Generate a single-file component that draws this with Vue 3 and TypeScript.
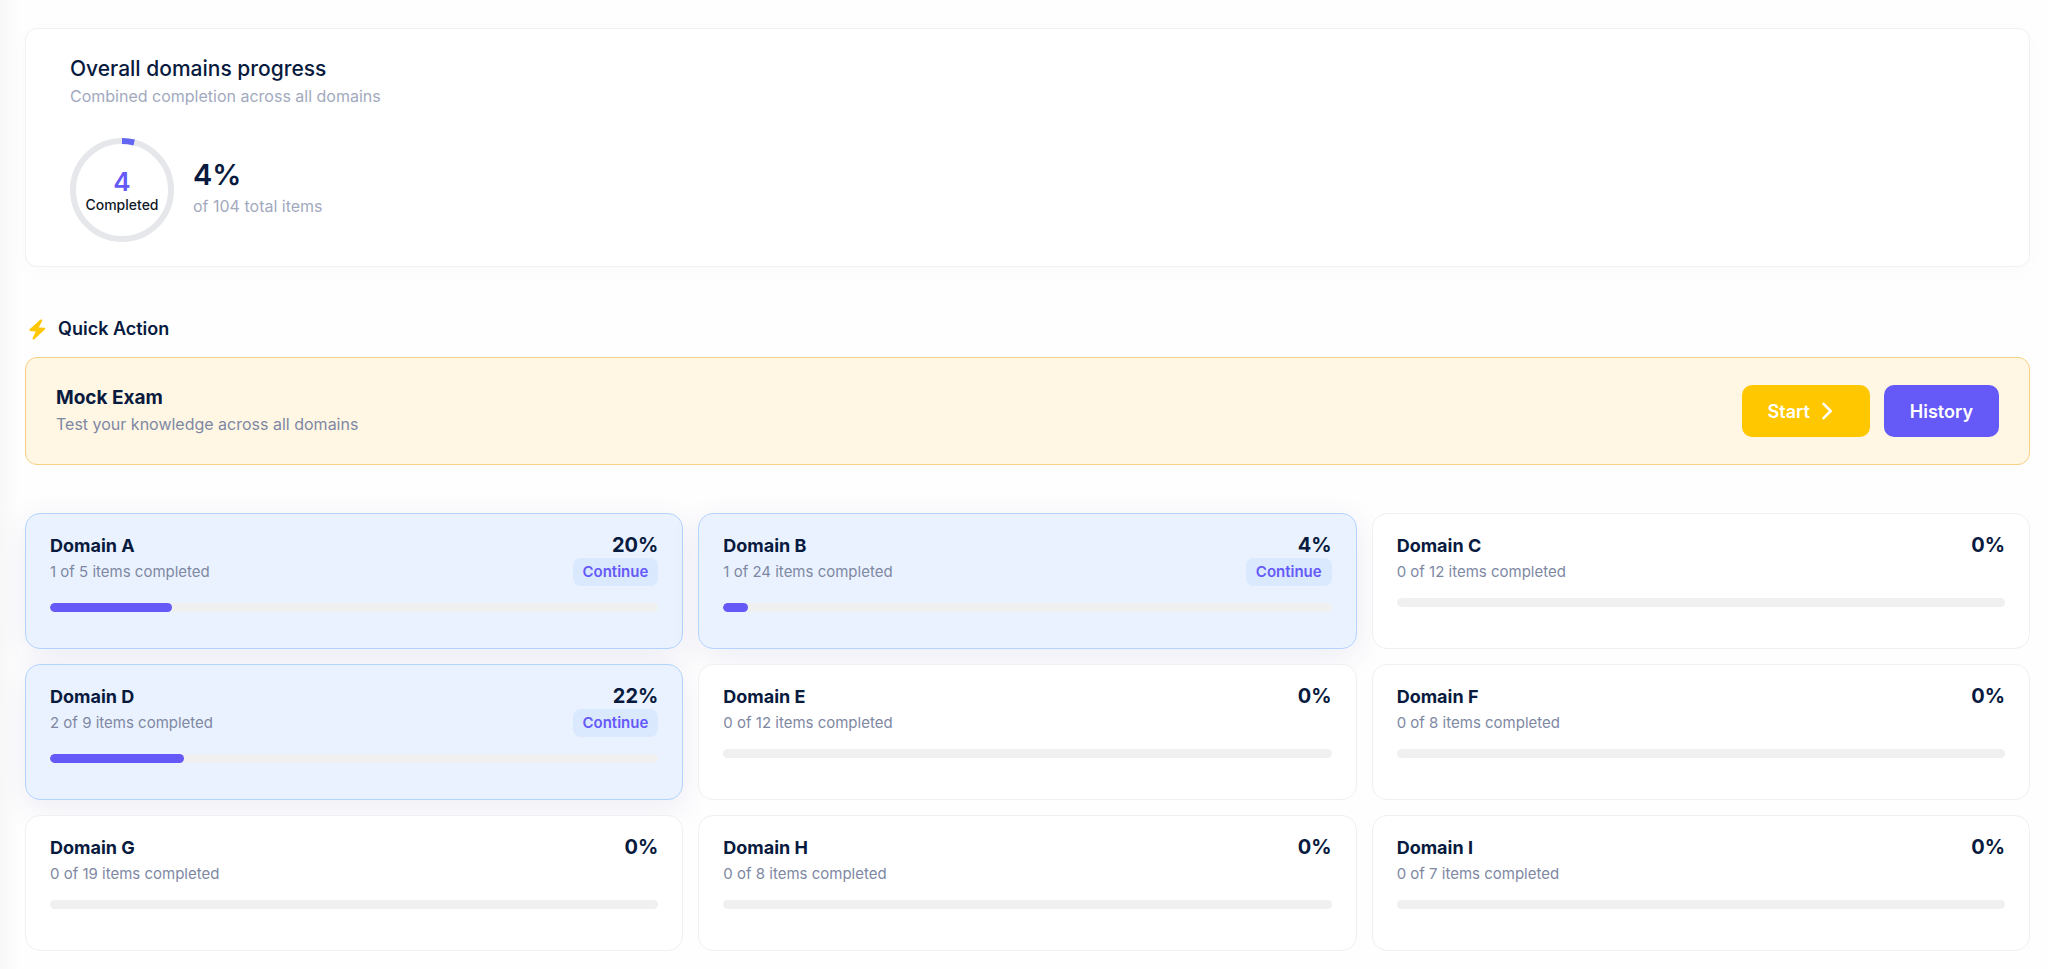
<script setup lang="ts">
import { computed } from 'vue'

interface Domain {
  name: string
  done: number
  total: number
}

const domains: Domain[] = [
  { name: 'Domain A', done: 1, total: 5 },
  { name: 'Domain B', done: 1, total: 24 },
  { name: 'Domain C', done: 0, total: 12 },
  { name: 'Domain D', done: 2, total: 9 },
  { name: 'Domain E', done: 0, total: 12 },
  { name: 'Domain F', done: 0, total: 8 },
  { name: 'Domain G', done: 0, total: 19 },
  { name: 'Domain H', done: 0, total: 8 },
  { name: 'Domain I', done: 0, total: 7 },
]

const percent = (done: number, total: number): number => Math.round((done / total) * 100)

const completed = computed(() => domains.reduce((sum, d) => sum + d.done, 0))
const total = computed(() => domains.reduce((sum, d) => sum + d.total, 0))
const overall = computed(() => percent(completed.value, total.value))
</script>

<template>
  <main class="page">
    <section class="overall" aria-labelledby="overall-title">
      <h2 id="overall-title" class="overall-title">Overall domains progress</h2>
      <p class="overall-sub">Combined completion across all domains</p>
      <div class="overall-body">
        <div class="ring">
          <svg class="ring-svg" viewBox="0 0 104 104" aria-hidden="true">
            <circle class="ring-track" cx="52" cy="52" r="49" />
            <circle
              class="ring-value"
              cx="52"
              cy="52"
              r="49"
              pathLength="100"
              :stroke-dasharray="`${overall} 100`"
              transform="rotate(-90 52 52)"
            />
          </svg>
          <div class="ring-label">
            <span class="ring-count">{{ completed }}</span>
            <span class="ring-text">Completed</span>
          </div>
        </div>
        <div class="overall-figures">
          <div class="overall-percent">{{ overall }}%</div>
          <div class="overall-total">of {{ total }} total items</div>
        </div>
      </div>
    </section>

    <section aria-labelledby="quick-title">
      <h2 id="quick-title" class="quick-title">
        <svg class="bolt" viewBox="0 0 24 24" aria-hidden="true">
          <path
            d="M15.2 2.8 4.6 12.2c-.7.7-.4 1.7.6 1.800l5.600.5-3.200 6.600c-.5 1.200.8 2 1.700 1.200l10.500-9.700c.8-.7.4-1.800-.7-1.800l-5.400-.4 3.400-6.400c.5-1.200-.9-2.100-1.900-1.200z"
          />
        </svg>
        Quick Action
      </h2>
      <div class="exam">
        <div>
          <h3 class="exam-title">Mock Exam</h3>
          <p class="exam-sub">Test your knowledge across all domains</p>
        </div>
        <div class="exam-actions">
          <button type="button" class="btn btn-start">
            Start
            <svg class="chevron" viewBox="0 0 24 24" aria-hidden="true">
              <path d="M3.500 4.800 10.700 12l-7.200 7.200" />
            </svg>
          </button>
          <button type="button" class="btn btn-history">History</button>
        </div>
      </div>
    </section>

    <section class="domains" aria-label="Domains">
      <article
        v-for="d in domains"
        :key="d.name"
        class="domain"
        :class="{ active: d.done > 0 }"
      >
        <div class="domain-head">
          <div>
            <h3 class="domain-name">{{ d.name }}</h3>
            <p class="domain-sub">{{ d.done }} of {{ d.total }} items completed</p>
          </div>
          <div class="domain-side">
            <span class="domain-percent">{{ percent(d.done, d.total) }}%</span>
            <button v-if="d.done > 0" type="button" class="continue">Continue</button>
          </div>
        </div>
        <div
          class="bar"
          role="progressbar"
          :aria-label="d.name"
          :aria-valuenow="percent(d.done, d.total)"
          aria-valuemin="0"
          aria-valuemax="100"
        >
          <div class="bar-fill" :style="{ width: `${percent(d.done, d.total)}%` }"></div>
        </div>
      </article>
    </section>
  </main>
</template>

<style>
body {
  margin: 0;
  background: #fefefe;
}
</style>

<style scoped>
.page {
  box-sizing: border-box;
  min-height: 100vh;
  padding: 28px 18px 18px 25px;
  font-family: Inter, "Liberation Sans", sans-serif;
  color: #081a3e;
  background: linear-gradient(90deg, #f8f8f8, #fefefe 20px);
}

h2,
h3,
p {
  margin: 0;
}

.overall {
  padding: 26px 44px 24px;
  border: 1px solid #f0f0f1;
  border-radius: 12px;
  background: #fff;
  box-shadow: 0 4px 24px rgba(0, 0, 0, 0.02);
}

.overall-title {
  font-size: 21px;
  line-height: 28px;
  font-weight: 500;
}

.overall-sub {
  font-size: 16px;
  line-height: 26px;
  color: #a2a9be;
}

.overall-body {
  display: flex;
  align-items: center;
  gap: 19px;
  margin-top: 29px;
}

.ring {
  position: relative;
  width: 104px;
  height: 104px;
}

.ring-svg {
  display: block;
  width: 100%;
  height: 100%;
}

.ring-track,
.ring-value {
  fill: none;
  stroke-width: 6;
}

.ring-track {
  stroke: #e5e7eb;
}

.ring-value {
  stroke: #6366f1;
}

.ring-label {
  position: absolute;
  inset: 0;
  display: flex;
  flex-direction: column;
  align-items: center;
  justify-content: center;
  padding-top: 3px;
}

.ring-count {
  font-size: 26px;
  line-height: 26px;
  font-weight: 600;
  color: #6559f8;
}

.ring-text {
  font-size: 14px;
  line-height: 20px;
  font-weight: 500;
  color: #111827;
}

.overall-figures {
  padding-bottom: 4px;
}

.overall-percent {
  font-size: 29px;
  line-height: 36px;
  font-weight: 600;
}

.overall-total {
  font-size: 16px;
  line-height: 26px;
  color: #a2a9be;
}

.quick-title {
  display: flex;
  align-items: center;
  gap: 9px;
  margin-top: 48px;
  font-size: 18px;
  line-height: 28px;
  font-weight: 600;
}

.bolt {
  width: 24px;
  height: 24px;
  fill: #ffc700;
}

.exam {
  display: flex;
  align-items: center;
  justify-content: space-between;
  margin-top: 14px;
  padding: 27px 30px;
  border: 1px solid #f6d083;
  border-radius: 12px;
  background: #fff6e4;
}

.exam-title {
  font-size: 19px;
  line-height: 26px;
  font-weight: 700;
}

.exam-sub {
  font-size: 16px;
  line-height: 26px;
  color: #7e88a3;
}

.exam-actions {
  display: flex;
  gap: 14px;
}

.btn {
  display: flex;
  align-items: center;
  gap: 10px;
  height: 52px;
  padding: 0 26px;
  border: 0;
  border-radius: 10px;
  font: inherit;
  font-size: 18px;
  font-weight: 600;
  color: #fff;
  cursor: pointer;
}

.btn-start {
  background: #ffc700;
}

.btn-history {
  background: #6559f8;
}

.chevron {
  width: 24px;
  height: 24px;
  fill: none;
  stroke: currentColor;
  stroke-width: 2.5;
  stroke-linecap: round;
  stroke-linejoin: round;
}

.domains {
  display: grid;
  grid-template-columns: repeat(3, 1fr);
  gap: 15px;
  margin-top: 48px;
}

.domain {
  box-sizing: border-box;
  min-height: 136px;
  padding: 18px 24px;
  border: 1px solid #f0f0f1;
  border-radius: 15px;
  background: #fff;
}

.domain.active {
  border-color: #b3d4ff;
  background: #eaf2ff;
  box-shadow: 0 8px 32px rgba(60, 50, 150, 0.09);
}

.domain-head {
  display: flex;
  justify-content: space-between;
  margin-bottom: 17px;
}

.domain-name {
  font-size: 18px;
  line-height: 28px;
  font-weight: 700;
}

.domain-sub {
  margin-top: 2px;
  font-size: 15px;
  line-height: 19px;
  color: #7e88a3;
}

.domain-side {
  display: flex;
  flex-direction: column;
  align-items: flex-end;
}

.domain-percent {
  font-size: 20px;
  line-height: 26px;
  font-weight: 700;
}

.continue {
  height: 28px;
  padding: 0 10px 2px;
  border: 0;
  border-radius: 8px;
  font: inherit;
  font-size: 15px;
  font-weight: 600;
  color: #6559f8;
  background: #dbe9fe;
  cursor: pointer;
}

.bar {
  height: 9px;
  border-radius: 5px;
  background: #f0f0f0;
  overflow: hidden;
}

.bar-fill {
  height: 100%;
  border-radius: 5px;
  background: #6559f8;
}
</style>
